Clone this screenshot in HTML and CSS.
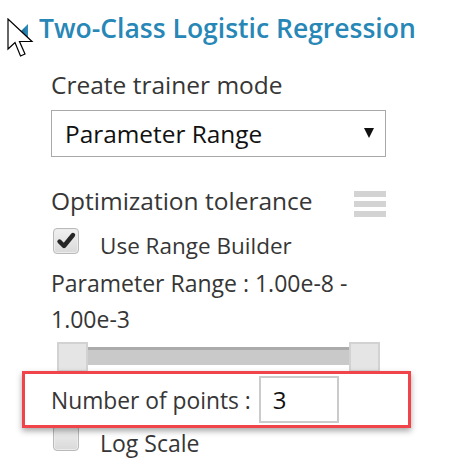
FILE: index.html
```html
<!DOCTYPE html>
<html>
<head>
<meta charset="utf-8">
<link rel="stylesheet" href="styles.css">
</head>
<body>
<div class="panel">
  <div class="header">
    <svg class="collapse" width="16" height="16" viewBox="0 0 16 16">
      <defs>
        <linearGradient id="tg" x1="0" y1="0" x2="1" y2="0">
          <stop offset="0" stop-color="#14455c"/>
          <stop offset="1" stop-color="#2a8fc0"/>
        </linearGradient>
      </defs>
      <polygon points="15,1 15,15 1,15" fill="url(#tg)"/>
    </svg>
    <h1 class="title">Two-Class Logistic Regression</h1>
  </div>
  <div class="content">
    <div class="label label-mode">Create trainer mode</div>
    <div class="select">
      <span class="select-value">Parameter Range</span>
      <svg class="select-arrow" width="10" height="10" viewBox="0 0 10 10"><polygon points="0,0 10,0 5,10" fill="#111"/></svg>
    </div>
    <div class="label-row">
      <span class="label">Optimization tolerance</span>
      <span class="hamburger"><i></i><i></i><i></i></span>
    </div>
    <div class="check-row">
      <span class="checkbox">
        <svg width="26" height="26" viewBox="0 0 26 26"><path d="M6.5 13.5 L11 18 L20 7" fill="none" stroke="#262626" stroke-width="4.4" stroke-linecap="round" stroke-linejoin="round"/></svg>
      </span>
      <span class="check-text">Use Range Builder</span>
    </div>
    <div class="range-text">Parameter Range : 1.00e-8 -<br>1.00e-3</div>
    <div class="slider">
      <span class="handle"></span>
      <span class="track"></span>
      <span class="handle"></span>
    </div>
    <div class="points-box">
      <span class="points-label">Number of points :</span>
      <span class="points-input">3</span>
    </div>
    <div class="check-row log-row">
      <span class="checkbox"></span>
      <span class="check-text">Log Scale</span>
    </div>
  </div>
  <svg class="cursor" width="30" height="42" viewBox="0 0 30 42">
    <path d="M1 1 L1 31 L8 24.5 L13.5 38 L18 36 L12.5 23.5 L25 23.5 Z" fill="#fff" stroke="#000" stroke-width="1.2" stroke-linejoin="miter"/>
  </svg>
</div>
</body>
</html>
```

FILE: styles.css
```css
html, body {
  margin: 0;
  padding: 0;
  background: #fff;
}

body {
  font-family: "Open Sans", "Noto Sans", sans-serif;
  color: #363636;
}

.panel {
  position: relative;
  width: 467px;
  height: 475px;
  overflow: hidden;
  padding-top: 13px;
  box-sizing: border-box;
}

.header {
  display: flex;
  align-items: flex-start;
  height: 30px;
  padding-left: 13px;
}

.collapse {
  margin-top: 10px;
  margin-right: 10px;
  flex: none;
}

.title {
  margin: 0;
  font-size: 26.5px;
  line-height: 30px;
  font-weight: 600;
  color: #2787b6;
  white-space: nowrap;
}

.content {
  padding-left: 51px;
  width: 335px;
  display: flex;
  flex-direction: column;
}

.label {
  font-size: 24.5px;
  line-height: 30px;
  white-space: nowrap;
}

.label-mode {
  margin-top: 26.5px;
}

.select {
  margin-top: 10px;
  height: 47px;
  box-sizing: border-box;
  border: 1px solid #a9a9a9;
  display: flex;
  align-items: center;
  justify-content: space-between;
  padding: 2px 11px 0 13px;
}

.select-value {
  font-size: 24.4px;
  line-height: 30px;
  color: #111;
}

.select-arrow {
  margin-top: -2px;
}

.label-row {
  margin-top: 29.5px;
  display: flex;
  justify-content: space-between;
  align-items: flex-start;
}

.hamburger {
  margin-top: 4.5px;
  width: 32px;
  display: flex;
  flex-direction: column;
  gap: 4px;
}

.hamburger i {
  display: block;
  height: 6px;
  background: #d3d3d3;
}

.check-row {
  display: flex;
  align-items: flex-start;
  margin-top: 11.5px;
}

.checkbox {
  flex: none;
  width: 26px;
  height: 26px;
  box-sizing: border-box;
  margin-left: 2px;
  border: 1px solid #b9b9b9;
  border-radius: 4px;
  background: linear-gradient(#f1f1f1, #d9d9d9);
  box-shadow: inset 0 0 0 1px #ececec;
  position: relative;
}

.checkbox svg {
  position: absolute;
  left: -1px;
  top: -1px;
}

.check-text {
  margin-left: 21px;
  margin-top: 3.3px;
  font-size: 22.5px;
  line-height: 30px;
  white-space: nowrap;
}

.range-text {
  margin-top: 3.7px;
  font-size: 23px;
  line-height: 36px;
  white-space: nowrap;
}

.slider {
  margin-top: 5px;
  margin-left: 6px;
  width: 323px;
  display: flex;
  align-items: flex-start;
  height: 30px;
}

.handle {
  flex: none;
  width: 31px;
  height: 30px;
  box-sizing: border-box;
  background: #e5e5e5;
  border: 2px solid #d2d2d2;
}

.track {
  flex: 1;
  margin-top: 5px;
  height: 18px;
  box-sizing: border-box;
  background: #c9c9c9;
  border-top: 3px solid #ababab;
}

.points-box {
  position: relative;
  z-index: 2;
  margin: -1px -25px 0 -29px;
  height: 57px;
  box-sizing: border-box;
  border: 3px solid #f0434a;
  background: #fff;
  box-shadow: 0 3px 6px rgba(0, 0, 0, 0.35);
  display: flex;
  align-items: flex-start;
  padding: 2px 0 0 26px;
}

.points-label {
  font-size: 22.8px;
  line-height: 30px;
  margin-top: 10px;
  white-space: nowrap;
}

.points-input {
  margin-left: 8px;
  width: 80px;
  height: 47px;
  box-sizing: border-box;
  border: 2px solid #cbcbcb;
  padding: 7px 0 0 12px;
  font-size: 24px;
  line-height: 30px;
  color: #111;
}

.log-row {
  margin-top: -3px;
}

.log-row .check-text {
  margin-top: 3.1px;
  font-size: 23px;
}

.cursor {
  position: absolute;
  left: 7px;
  top: 18px;
}
```
